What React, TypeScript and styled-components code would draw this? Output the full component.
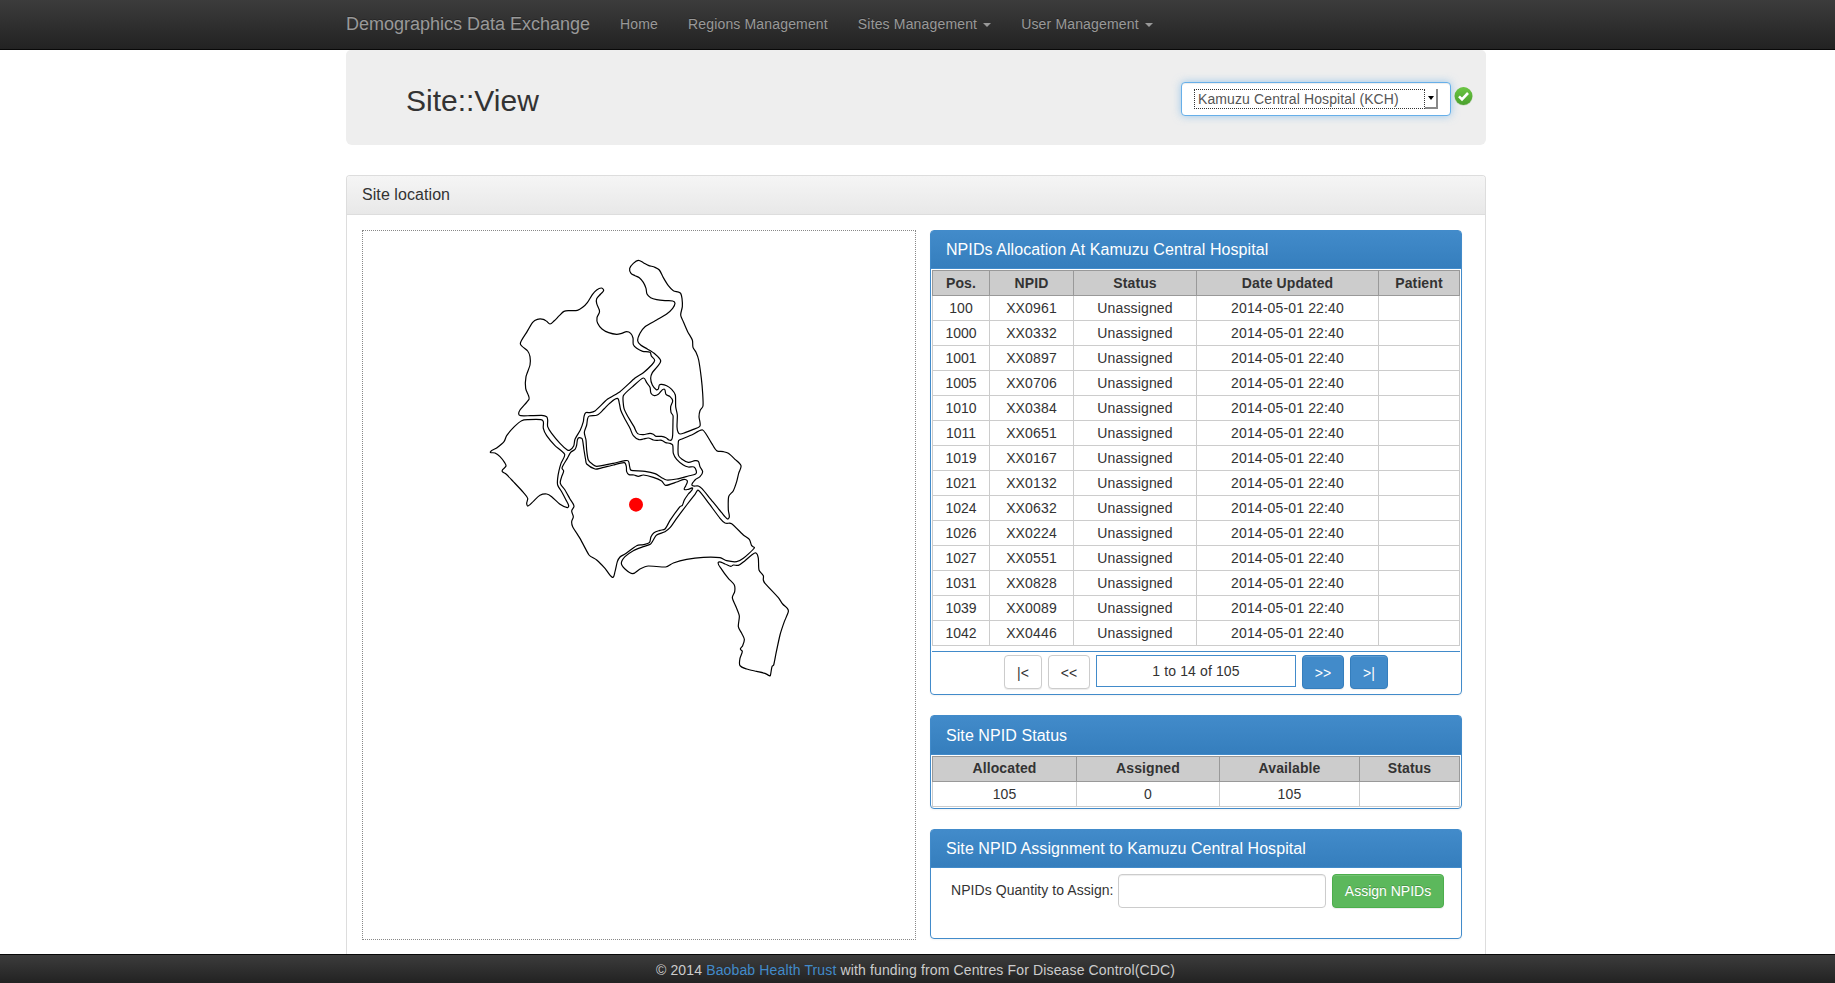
import React from "react";
import styled, { createGlobalStyle, css } from "styled-components";

const GlobalStyle = createGlobalStyle`
  *, *::before, *::after { box-sizing: border-box; }
  html, body { margin: 0; padding: 0; height: 100%; background: #fff; overflow: hidden; }
  #root { height: 983px; }
  body {
    font-family: "Liberation Sans", Helvetica, Arial, sans-serif;
    font-size: 14px;
    line-height: 20px;
    color: #333;
  }
  h1, h3 { margin: 0; font-weight: 500; }
`;

const Page = styled.div`
  display: flex;
  flex-direction: column;
  height: 983px;
  overflow: hidden;
`;

const Navbar = styled.nav`
  display: flex;
  flex: none;
  align-items: flex-start;
  height: 50px;
  padding-left: 346px;
  background: linear-gradient(to bottom, #3c3c3c 0%, #222 100%);
  border-bottom: 1px solid #080808;
  color: #999;
  text-shadow: 0 -1px 0 rgba(0, 0, 0, 0.25);
  white-space: nowrap;
`;

const Brand = styled.a`
  width: 259px;
  padding-top: 14px;
  font-size: 18px;
  line-height: 20px;
`;

const NavLink = styled.a`
  display: flex;
  align-items: center;
  padding: 14px 15px 15px;
  letter-spacing: 0.16px;
  line-height: 20px;
`;

const Caret = styled.span`
  margin: 2px 0 0 6px;
  border-top: 4px solid #999;
  border-left: 4px solid transparent;
  border-right: 4px solid transparent;
`;

const Main = styled.main`
  display: flex;
  flex: 1;
  flex-direction: column;
  width: 1140px;
  min-height: 0;
  margin-left: 346px;
`;

const Jumbotron = styled.header`
  display: flex;
  flex: none;
  justify-content: space-between;
  height: 95px;
  padding: 32px 12px 0 60px;
  background: #eee;
  border-radius: 5px 5px 6px 6px;
`;

const Title = styled.h1`
  padding-top: 2px;
  font-size: 30px;
  line-height: 33px;
`;

const SitePicker = styled.div`
  display: flex;
  align-items: flex-start;
  gap: 3px;
`;

const SelectBox = styled.div`
  display: flex;
  width: 270px;
  height: 34px;
  padding: 6px 12px;
  background: #fff;
  border: 1px solid #66afe9;
  border-radius: 4px;
  box-shadow: inset 0 1px 1px rgba(0, 0, 0, 0.075), 0 0 8px rgba(102, 175, 233, 0.6);
  color: #555;
`;

const SelectValue = styled.span`
  width: 231px;
  height: 20px;
  padding-left: 3px;
  border: 1px dotted #333;
  letter-spacing: 0.11px;
  line-height: 19px;
  white-space: nowrap;
`;

const SelectArrow = styled.span`
  display: flex;
  align-items: center;
  justify-content: center;
  width: 13px;
  height: 20px;
  background: #fff;
  border-right: 2px solid #888;
  border-bottom: 2px solid #888;

  &::after {
    content: "";
    border-top: 4px solid #000;
    border-left: 3.5px solid transparent;
    border-right: 3.5px solid transparent;
  }
`;

const CheckIcon = styled.svg`
  width: 20px;
  height: 20px;
  margin-top: 4px;
`;

const LocationPanel = styled.section`
  display: flex;
  flex: 1;
  flex-direction: column;
  margin-top: 30px;
  border: 1px solid #ddd;
  border-bottom: 0;
  border-radius: 4px 4px 0 0;
`;

const panelTitle = css`
  flex: none;
  font-size: 16px;
  font-weight: 500;
  letter-spacing: 0.07px;
  line-height: 18px;
`;

const LocationHeading = styled.h3`
  ${panelTitle}
  height: 39px;
  padding: 10px 15px;
  background: linear-gradient(to bottom, #f5f5f5 0%, #e8e8e8 100%);
  border-bottom: 1px solid #ddd;
  border-radius: 3px 3px 0 0;
`;

const Columns = styled.div`
  display: flex;
  gap: 14px;
  padding: 15px;
`;

const MapFrame = styled.div`
  width: 554px;
  height: 710px;
  border: 1px dotted #888;

  svg { display: block; }
`;

const Side = styled.div`
  display: flex;
  flex-direction: column;
  gap: 20px;
  width: 532px;
`;

const BluePanel = styled.section<{ $height: number }>`
  flex: none;
  height: ${(p) => p.$height}px;
  border: 1px solid #428bca;
  border-radius: 4px;
  box-shadow: 0 1px 2px rgba(0, 0, 0, 0.05);
`;

const BlueHeading = styled.h3<{ $tall?: boolean }>`
  ${panelTitle}
  height: ${(p) => (p.$tall ? 39 : 38)}px;
  padding: ${(p) => (p.$tall ? 11 : 10)}px 15px 0;
  background: linear-gradient(to bottom, #428bca 0%, #357ebd 100%);
  border-bottom: 1px solid #428bca;
  border-radius: 2px 2px 0 0;
  color: #fff;
`;

const DataTable = styled.table<{ $headDrop: number }>`
  width: 528px;
  margin: 1px 1px 0;
  border-collapse: separate;
  border-spacing: 0;
  table-layout: fixed;
  text-align: center;

  th, td {
    height: 25px;
    padding: 2px 0;
    line-height: 20px;
    vertical-align: top;
  }
  td {
    border-right: 1px solid #ccc;
    border-bottom: 1px solid #ccc;
    letter-spacing: 0.15px;
  }
  td:first-child { border-left: 1px solid #ccc; letter-spacing: 0; }
  th {
    height: 26px;
    padding: ${(p) => p.$headDrop}px 0 0;
    background: #ccc;
    border: 1px solid #999;
    border-left: 0;
    letter-spacing: 0.1px;
  }
  th:first-child { border-left: 1px solid #999; }
`;

const Pager = styled.div`
  display: flex;
  justify-content: center;
  gap: 6px;
  margin: 5px 1px 0;
  padding-top: 3px;
  border-top: 1px solid #428bca;
`;

type Tone = "plain" | "primary" | "success";

const tones: Record<Tone, [string, string, string]> = {
  plain: ["#fff", "#ccc", "#333"],
  primary: ["#428bca", "#357ebd", "#fff"],
  success: ["#5cb85c", "#4cae4c", "#fff"],
};

const Button = styled.button<{ $tone: Tone; $width: number }>`
  flex: none;
  width: ${(p) => p.$width}px;
  height: 34px;
  padding: ${(p) => (p.$tone === "success" ? "0 0 1px" : "1px 0 0")};
  background: ${(p) => tones[p.$tone][0]};
  border: 1px solid ${(p) => tones[p.$tone][1]};
  border-radius: 4px;
  box-shadow: inset 0 1px 0 rgba(255, 255, 255, 0.15), 0 1px 1px rgba(0, 0, 0, 0.075);
  color: ${(p) => tones[p.$tone][2]};
  font: inherit;
  line-height: 20px;
  ${(p) => p.$tone === "success" && "text-shadow: 0 -1px 0 rgba(0, 0, 0, 0.2);"}
`;

const PageRange = styled.div`
  width: 200px;
  height: 32px;
  border: 1px solid #428bca;
  letter-spacing: 0.12px;
  line-height: 30px;
  text-align: center;
`;

const AssignForm = styled.form`
  display: flex;
  align-items: flex-start;
  padding: 6px 17px 0 20px;
`;

const AssignLabel = styled.label`
  width: 167px;
  padding-top: 6px;
  letter-spacing: 0.06px;
  white-space: nowrap;
`;

const AssignInput = styled.input`
  width: 208px;
  height: 34px;
  margin-right: 6px;
  border: 1px solid #ccc;
  border-radius: 4px;
  box-shadow: inset 0 1px 1px rgba(0, 0, 0, 0.075);
`;

const Footer = styled.footer`
  flex: none;
  height: 29px;
  padding: 5px 4px 0 0;
  background: linear-gradient(to bottom, #3c3c3c 0%, #222 100%);
  border-top: 1px solid #080808;
  color: #ccc;
  letter-spacing: 0.14px;
  text-align: center;

  a { color: #428bca; }
`;

type Point = [number, number];

/* Closed Catmull-Rom curve through a list of outline points. */
function outline(text: string): string {
  const pts = text.trim().split(/\s+/).map((p) => p.split(",").map(Number) as Point);
  const n = pts.length;
  const at = (i: number) => pts[(i + n) % n];
  let d = `M${pts[0].join(" ")}`;
  for (let i = 0; i < n; i++) {
    const [a, b, c, e] = [at(i - 1), at(i), at(i + 1), at(i + 2)];
    const len = Math.hypot(c[0] - b[0], c[1] - b[1]);
    const handle = (p: Point, q: Point): Point => {
      const span = Math.hypot(q[0] - p[0], q[1] - p[1]) || 1;
      const reach = Math.min(len * 0.3, 7);
      return [((q[0] - p[0]) / span) * reach, ((q[1] - p[1]) / span) * reach];
    };
    const h1 = handle(a, c);
    const h2 = handle(b, e);
    d += `C${b[0] + h1[0]} ${b[1] + h1[1]} ${c[0] - h2[0]} ${c[1] - h2[1]} ${c[0]} ${c[1]}`;
  }
  return d + "Z";
}

const districts = [
  "121,281 140,247 158,217 172,208 190,208 200,214 210,222 222,213 238,197 252,184 270,182 292,181 308,172 322,158 337,134 350,120 364,114 371,121 362,132 350,146 350,160 358,180 358,188 351,203 353,220 366,237 386,248 410,253 425,250 440,245 452,250 459,264 460,284 470,295 488,304 510,307 514,318 524,331 515,345 490,368 465,384 420,425 382,448 345,483 330,488 317,488 312,500 310,515 301,540 285,568 281,588 270,600 262,600 240,580 215,550 203,530 203,510 200,500 185,496 150,497 122,497 116,492 120,480 147,448 146,438 137,415 138,380 150,345 150,320 143,303",
  "31,606 50,594 72,575 80,557 103,530 125,512 145,509 183,509 190,515 190,535 200,557 225,587 254,613 243,640 237,662 233,685 233,705 245,725 258,750 266,767 262,773 240,763 215,740 200,732 180,736 160,754 144,768 140,760 143,745 130,727 100,695 78,672 67,665 68,659 78,648 74,638 60,620 45,609",
  "475,31 460,40 449,55 453,70 465,77 478,83 490,97 498,115 501,132 512,143 530,149 555,152 578,153 585,160 578,175 560,192 530,210 495,230 480,250 473,272 482,285 502,297 525,312 542,332 532,350 517,368 512,385 517,405 529,419 535,417 538,405 545,403 560,407 575,418 586,435 587,470 592,495 591,530 594,546 600,552 615,548 640,538 660,528 657,500 660,482 669,468 668,430 664,385 656,330 648,307 639,292 637,270 623,245 610,215 602,195 607,170 606,145 602,130 595,126 580,122 565,107 550,83 538,60 525,52 505,46 490,38",
  "490,384 460,408 430,437 432,475 445,502 462,530 473,551 490,554 510,550 520,553 528,559 545,559 558,563 567,570 575,569 578,555 579,510 579,497 573,487 572,470 578,452 570,440 558,433 552,417 535,433 523,437 513,430 510,412 500,398",
  "412,445 418,460 422,480 432,502 450,535 460,557 477,569 490,567 505,564 520,570 532,571 545,571 557,578 570,580 578,585 580,610 590,628 610,645 625,651 642,651 649,663 647,672 625,678 590,687 560,690 545,683 525,671 495,664 460,662 452,660 449,650 445,633 435,632 400,640 350,649 338,643 325,630 320,600 318,570 313,547 320,525 323,505 328,498 352,495 372,477 390,459",
  "294,565 290,585 285,598 272,607 262,625 250,645 246,655 251,663 245,680 241,700 255,720 270,747 282,768 275,783 280,800 275,815 278,830 300,865 327,915 350,930 375,955 397,982 405,965 412,935 420,921 435,912 470,887 490,884 508,878 513,860 522,848 540,841 555,837 570,811 600,770 607,766 613,750 625,732 638,715 625,718 613,718 617,708 622,693 612,688 590,696 557,706 545,693 520,682 490,675 475,679 462,675 447,674 440,665 439,650 433,638 400,645 360,655 345,657 320,642 317,630 312,600 308,572 305,565",
  "668,540 635,555 598,570 595,575 595,615 605,627 625,637 645,632 655,634 660,650 668,665 660,680 645,690 636,706 655,708 666,716 690,745 725,788 743,807 748,800 745,780 746,740 760,722 770,695 776,670 783,647 765,628 745,610 730,605 710,602 695,580",
  "655,721 645,733 620,765 590,805 570,833 555,845 530,855 520,870 512,882 490,890 460,902 435,920 424,940 435,957 458,971 480,957 505,948 557,951 580,939 620,928 670,922 720,923 740,932 770,935 790,925 823,894 815,887 808,868 790,855 755,821 735,819 720,805 685,758",
  "715,937 725,958 745,985 763,1005 764,1025 757,1043 768,1070 778,1098 775,1130 785,1150 793,1168 788,1187 781,1197 787,1204 780,1225 780,1247 800,1257 830,1264 855,1270 868,1277 871,1277 876,1250 881,1245 888,1210 900,1155 913,1115 925,1085 922,1075 908,1062 895,1043 855,1000 850,990 850,977 837,960 835,925 828,909 815,915 795,932 775,946 760,945 753,949 735,942",
].map(outline);

const DistrictMap = () => (
  <svg width="552" height="708" viewBox="-351 -57 1656 2124">
    {districts.map((d) => (
      <path key={d.slice(0, 12)} d={d} fill="none" stroke="#000" strokeWidth="3.6" />
    ))}
    <circle cx="468" cy="764" r="21" fill="#f00" />
  </svg>
);

const npids: [number, string][] = [
  [100, "XX0961"], [1000, "XX0332"], [1001, "XX0897"], [1005, "XX0706"], [1010, "XX0384"],
  [1011, "XX0651"], [1019, "XX0167"], [1021, "XX0132"], [1024, "XX0632"], [1026, "XX0224"],
  [1027, "XX0551"], [1031, "XX0828"], [1039, "XX0089"], [1042, "XX0446"],
];

interface GridProps {
  widths: number[];
  head: string[];
  rows: (string | number)[][];
  headDrop: number;
}

const Grid = ({ widths, head, rows, headDrop }: GridProps) => (
  <DataTable $headDrop={headDrop}>
    <colgroup>
      {widths.map((w, i) => (
        <col key={i} width={w} />
      ))}
    </colgroup>
    <thead>
      <tr>{head.map((h) => <th key={h}>{h}</th>)}</tr>
    </thead>
    <tbody>
      {rows.map((row, r) => (
        <tr key={r}>{row.map((cell, c) => <td key={c}>{cell}</td>)}</tr>
      ))}
    </tbody>
  </DataTable>
);

export default function App() {
  return (
    <Page>
      <GlobalStyle />
      <Navbar>
        <Brand>Demographics Data Exchange</Brand>
        <NavLink>Home</NavLink>
        <NavLink>Regions Management</NavLink>
        <NavLink>Sites Management<Caret /></NavLink>
        <NavLink>User Management<Caret /></NavLink>
      </Navbar>

      <Main>
        <Jumbotron>
          <Title>Site::View</Title>
          <SitePicker>
            <SelectBox>
              <SelectValue>Kamuzu Central Hospital (KCH)</SelectValue>
              <SelectArrow />
            </SelectBox>
            <CheckIcon viewBox="0 0 20 20">
              <defs>
                <linearGradient id="ok" x1="0" y1="0" x2="0" y2="1">
                  <stop offset="0" stopColor="#6cc644" />
                  <stop offset="1" stopColor="#4aa02c" />
                </linearGradient>
              </defs>
              <circle cx="9.5" cy="10.4" r="9.2" fill="#bdd3b4" />
              <circle cx="9.5" cy="10" r="8.9" fill="url(#ok)" />
              <path d="M5 10.4l3 3 6-6.4" fill="none" stroke="#fff" strokeWidth="2.6" />
            </CheckIcon>
          </SitePicker>
        </Jumbotron>

        <LocationPanel>
          <LocationHeading>Site location</LocationHeading>
          <Columns>
            <MapFrame>
              <DistrictMap />
            </MapFrame>
            <Side>
              <BluePanel $height={465}>
                <BlueHeading>NPIDs Allocation At Kamuzu Central Hospital</BlueHeading>
                <Grid
                  headDrop={2}
                  widths={[58, 84, 123, 182, 81]}
                  head={["Pos.", "NPID", "Status", "Date Updated", "Patient"]}
                  rows={npids.map(([pos, id]) => [pos, id, "Unassigned", "2014-05-01 22:40", ""])}
                />
                <Pager>
                  <Button $tone="plain" $width={38}>|&lt;</Button>
                  <Button $tone="plain" $width={42}>&lt;&lt;</Button>
                  <PageRange>1 to 14 of 105</PageRange>
                  <Button $tone="primary" $width={42}>&gt;&gt;</Button>
                  <Button $tone="primary" $width={38}>&gt;|</Button>
                </Pager>
              </BluePanel>

              <BluePanel $height={94}>
                <BlueHeading $tall>Site NPID Status</BlueHeading>
                <Grid
                  headDrop={1}
                  widths={[145, 143, 140, 100]}
                  head={["Allocated", "Assigned", "Available", "Status"]}
                  rows={[[105, 0, 105, ""]]}
                />
              </BluePanel>

              <BluePanel $height={110}>
                <BlueHeading>Site NPID Assignment to Kamuzu Central Hospital</BlueHeading>
                <AssignForm>
                  <AssignLabel htmlFor="quantity">NPIDs Quantity to Assign:</AssignLabel>
                  <AssignInput id="quantity" />
                  <Button type="button" $tone="success" $width={112}>Assign NPIDs</Button>
                </AssignForm>
              </BluePanel>
            </Side>
          </Columns>
        </LocationPanel>
      </Main>

      <Footer>
        © 2014 <a>Baobab Health Trust</a> with funding from Centres For Disease Control(CDC)
      </Footer>
    </Page>
  );
}
